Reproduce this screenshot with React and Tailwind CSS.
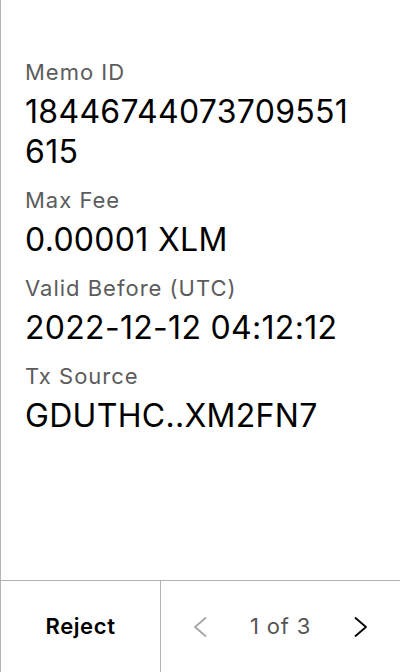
const fields = [
  { label: "Memo ID", value: "18446744073709551615" },
  { label: "Max Fee", value: "0.00001 XLM" },
  { label: "Valid Before (UTC)", value: "2022-12-12 04:12:12" },
  { label: "Tx Source", value: "GDUTHC..XM2FN7" },
];

function Chevron({ dir, className }) {
  const d = dir === "left" ? "M12.5 1 L2 10 L12.5 19" : "M1.5 1 L12 10 L1.5 19";
  return (
    <svg width="14" height="20" viewBox="0 0 14 20" fill="none" className={className}>
      <path d={d} stroke="currentColor" strokeWidth="1.8" strokeLinecap="round" strokeLinejoin="round" />
    </svg>
  );
}

export default function App() {
  return (
    <div
      className="w-[400px] h-[672px] bg-white flex flex-col border-l border-[#b3b3b3]"
      style={{ fontFamily: "Inter, 'Noto Sans', sans-serif" }}
    >
      {/* Details */}
      <div className="flex-1 pl-6 pr-[36px] pt-[58px]">
        {fields.map((f) => (
          <div key={f.label} className="mb-[14px]">
            <p className="text-[22px] leading-[28px] tracking-[1px] text-[#5c5c5c]">{f.label}</p>
            <p className="mt-[6px] text-[32px] leading-[40px] tracking-[0.3px] text-black break-all">
              {f.value}
            </p>
          </div>
        ))}
      </div>

      {/* Footer */}
      <div className="h-[92px] flex border-t border-[#b3b3b3]">
        <button className="w-[160px] flex items-center justify-center text-[22px] tracking-[0.6px] font-semibold text-black border-r border-[#b3b3b3]">
          Reject
        </button>
        <div className="flex-1 flex items-center justify-between pl-[32px] pr-[32px]">
          <Chevron dir="left" className="text-[#a6a6a6]" />
          <span className="text-[22px] tracking-[0.8px] text-[#555555]">1 of 3</span>
          <Chevron dir="right" className="text-black" />
        </div>
      </div>
    </div>
  );
}
